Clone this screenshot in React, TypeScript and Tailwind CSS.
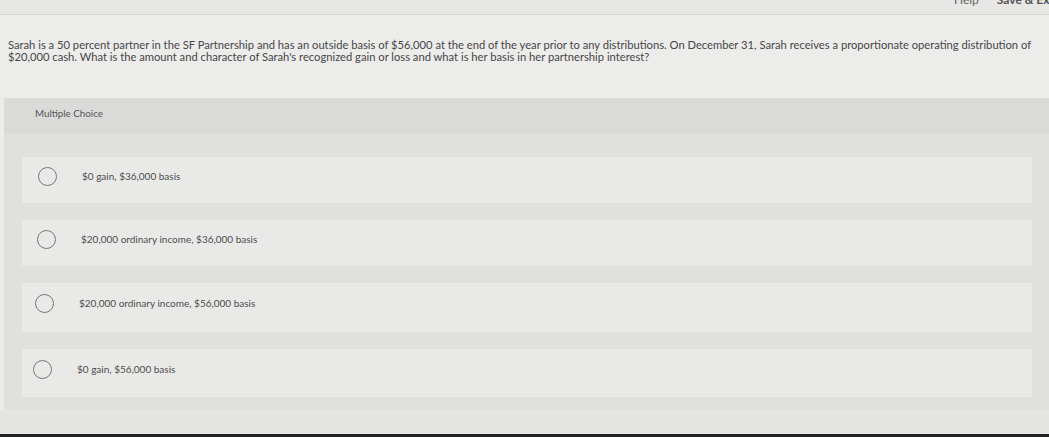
const OPTIONS = [
  { label: '$0 gain, $36,000 basis', h: 'h-[46px]', pl: 'pl-[16px]' },
  { label: '$20,000 ordinary income, $36,000 basis', h: 'h-[46px]', pl: 'pl-[15px]' },
  { label: '$20,000 ordinary income, $56,000 basis', h: 'h-[49px]', pl: 'pl-[13px]' },
  { label: '$0 gain, $56,000 basis', h: 'h-[48px]', pl: 'pl-[11px]' },
];

export default function App() {
  return (
    <div
      className="flex h-[437px] w-[1049px] flex-col overflow-hidden bg-[#ececeb] text-[#4a4a4a]"
      style={{ fontFamily: 'Lato, "Open Sans", sans-serif' }}
    >
      {/* top bar, mostly cut off */}
      <div className="flex h-[15px] shrink-0 items-start justify-end gap-[18px] overflow-hidden border-b border-[#d6d6d4] bg-[#e7e7e5]">
        <span className="-mt-[9px] text-[12px] text-[#666]">Help</span>
        <span className="-mr-[8px] -mt-[9px] text-[12px] font-bold text-[#555]">Save &amp; Exit</span>
      </div>

      {/* question */}
      <div className="h-[83px] shrink-0 px-[8px] pt-[24px]">
        <p className="max-w-[1032px] text-[11.2px] leading-[11.5px] text-[#474747]">
          Sarah is a 50 percent partner in the SF Partnership and has an outside basis of $56,000 at the end of the year
          prior to any distributions. On December 31, Sarah receives a proportionate operating distribution of $20,000 cash.
          What is the amount and character of Sarah's recognized gain or loss and what is her basis in her partnership
          interest?
        </p>
      </div>

      {/* multiple choice panel */}
      <div className="ml-[4px] flex h-[312px] shrink-0 flex-col bg-[#e0e0df]">
        <div className="flex h-[36px] items-start bg-[#dadad9] pl-[31px] pt-[8px] text-[9.8px] text-[#555]">
          Multiple Choice
        </div>
        <div className="ml-[18px] flex flex-col gap-[17px] pr-[17px] pt-[23px]">
          {OPTIONS.map((o) => (
            <div key={o.label} className={`flex ${o.h} ${o.pl} items-center bg-[#e9e9e8] pb-[8px]`}>
              <span className="h-[19px] w-[19px] shrink-0 rounded-full border-[1.5px] border-[#777]" />
              <span className="ml-[25px] text-[10px] text-[#4d4d4d]">{o.label}</span>
            </div>
          ))}
        </div>
      </div>

      <div className="flex-1 bg-[#e4e4e3]" />
      <div className="h-[3px] shrink-0 bg-[#222]" />
    </div>
  );
}
